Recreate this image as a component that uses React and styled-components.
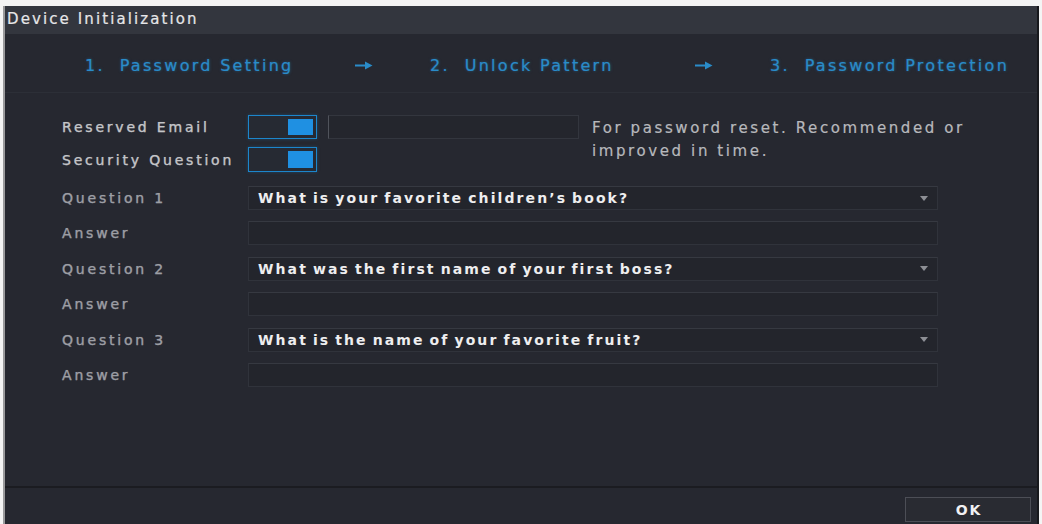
import React from 'react';
import styled, { createGlobalStyle } from 'styled-components';

const GlobalStyle = createGlobalStyle`
  html, body {
    margin: 0;
    padding: 0;
    background: #f4f4f4;
  }
  body {
    font-family: 'DejaVu Sans', 'Liberation Sans', sans-serif;
  }
`;

const Page = styled.div`
  padding: 6px 3px 0 3px;
  height: 524px;
  box-sizing: border-box;
`;

const Dialog = styled.div`
  height: 518px;
  box-sizing: border-box;
  border-left: 2px solid #9a9a9c;
  border-right: 2px solid #17181c;
  background: #262830;
  display: flex;
  flex-direction: column;
`;

const TitleBar = styled.div`
  height: 28px;
  background: #33363e;
  color: #e6e6e8;
  font-size: 15px;
  letter-spacing: 2.1px;
  display: flex;
  align-items: center;
  padding-left: 2px;
  padding-bottom: 3px;
  box-sizing: border-box;
  -webkit-text-stroke: 0.2px #e6e6e8;
`;

const Steps = styled.div`
  height: 59px;
  display: grid;
  grid-template-columns: 270px 75px 265px 75px 1fr;
  align-items: center;
  padding: 4px 0 0 80px;
  border-bottom: 1px solid #2c2f37;
  box-sizing: border-box;
`;

const Step = styled.div`
  color: #2a8cc9;
  font-size: 16px;
  letter-spacing: 2.3px;
  white-space: pre;
  -webkit-text-stroke: 0.2px #2a8cc9;
  text-shadow: 0 0 3px rgba(40, 140, 210, 0.5);
`;

const Content = styled.div`
  flex: 1;
  padding: 22px 0 0 57px;
`;

const TopGrid = styled.div`
  display: grid;
  grid-template-columns: 186px 80px 264px 1fr;
  grid-template-rows: 24px 25px;
  row-gap: 8px;
  align-items: center;
`;

const Label = styled.div`
  color: ${p => (p.$bright ? '#c4c5c8' : '#9c9ea4')};
  font-size: 14px;
  letter-spacing: 2.8px;
  white-space: nowrap;
  -webkit-text-stroke: 0.25px ${p => (p.$bright ? '#c4c5c8' : '#9c9ea4')};
  text-shadow: 0 0 1px rgba(200, 200, 205, 0.35);
`;

const Toggle = styled.div`
  width: 69px;
  height: ${p => p.$h || 24}px;
  box-sizing: border-box;
  border: 1px solid #1c86cc;
  background: #262a33;
  display: flex;
  justify-content: flex-end;
  padding: 3px 3px;
  box-shadow: 0 0 3px rgba(28, 134, 204, 0.35);
`;

const Knob = styled.div`
  width: 25px;
  background: #1f90e2;
`;

const EmailInput = styled.div`
  width: 251px;
  height: 24px;
  box-sizing: border-box;
  border: 1px solid #33363e;
  border-left-color: #50535b;
  background: #24262d;
`;

const Hint = styled.div`
  grid-column: 4;
  grid-row: 1 / span 2;
  align-self: start;
  color: #b7b8bc;
  font-size: 15px;
  line-height: 23px;
  letter-spacing: 2.6px;
  white-space: nowrap;
  margin-top: 2px;
  -webkit-text-stroke: 0.2px #b7b8bc;
`;

const QuestionGrid = styled.div`
  margin-top: 14px;
  display: grid;
  grid-template-columns: 186px 690px;
  grid-auto-rows: 24px;
  row-gap: 11.4px;
  align-items: center;
`;

const Field = styled.div`
  height: 24px;
  box-sizing: border-box;
  border: 1px solid #30333b;
  border-top-color: #363941;
  background: #23252c;
  display: flex;
  align-items: center;
  justify-content: space-between;
  padding: 0 9px 0 9px;
  color: #eeeeef;
  font-size: 14px;
  font-weight: bold;
  letter-spacing: 2.1px;
  word-spacing: -2px;
  white-space: nowrap;
`;

const Footer = styled.div`
  height: 38px;
  border-top: 2px solid #1b1c21;
  display: flex;
  justify-content: flex-end;
  align-items: flex-start;
  padding: 9px 6px 0 0;
  box-sizing: border-box;
`;

const OkButton = styled.button`
  width: 126px;
  height: 25px;
  background: #292b32;
  border: 1px solid #4c4e56;
  color: #f0f0f2;
  font-family: 'DejaVu Sans', sans-serif;
  font-size: 14px;
  font-weight: bold;
  letter-spacing: 2px;
  padding: 0 0 0 2px;
`;

const Arrow = () => (
  <svg width="18" height="9" viewBox="0 0 18 9">
    <rect x="0" y="3.5" width="11" height="2" fill="#2a8cc9" />
    <path d="M10 0.5 L17.5 4.5 L10 8.5 Z" fill="#2a8cc9" />
  </svg>
);

const Caret = () => (
  <svg width="8" height="5" viewBox="0 0 8 5">
    <path d="M0 0 L8 0 L4 5 Z" fill="#8d8f95" />
  </svg>
);

const questions = [
  'What is your favorite children\u2019s book?',
  'What was the first name of your first boss?',
  'What is the name of your favorite fruit?',
];

export default function App() {
  return (
    <>
      <GlobalStyle />
      <Page>
        <Dialog>
          <TitleBar>Device Initialization</TitleBar>
          <Steps>
            <Step>1.  Password Setting</Step>
            <Arrow />
            <Step>2.  Unlock Pattern</Step>
            <Arrow />
            <Step>3.  Password Protection</Step>
          </Steps>
          <Content>
            <TopGrid>
              <Label $bright>Reserved Email</Label>
              <Toggle><Knob /></Toggle>
              <EmailInput />
              <Hint>
                For password reset. Recommended or
                <br />
                improved in time.
              </Hint>
              <Label $bright>Security Question</Label>
              <Toggle $h={25}><Knob /></Toggle>
            </TopGrid>
            <QuestionGrid>
              {questions.map((q, i) => (
                <React.Fragment key={q}>
                  <Label>Question {i + 1}</Label>
                  <Field>
                    <span>{q}</span>
                    <Caret />
                  </Field>
                  <Label>Answer</Label>
                  <Field />
                </React.Fragment>
              ))}
            </QuestionGrid>
          </Content>
          <Footer>
            <OkButton>OK</OkButton>
          </Footer>
        </Dialog>
      </Page>
    </>
  );
}
